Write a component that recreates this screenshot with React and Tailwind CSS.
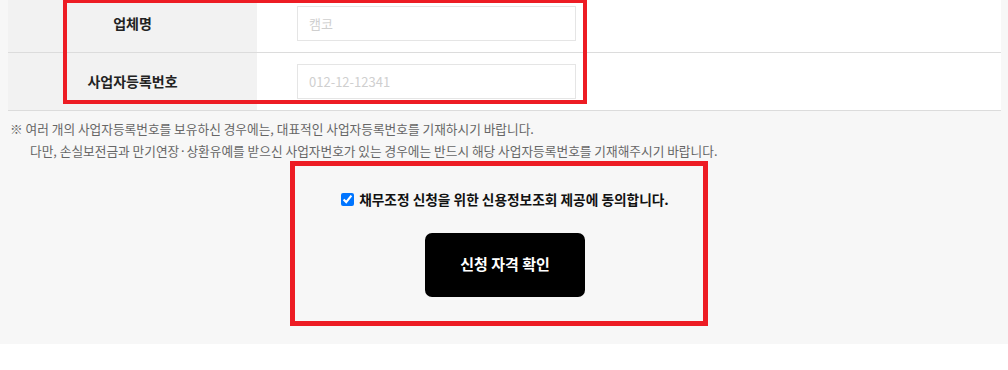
export default function App() {
  const rows = [
    { label: '업체명', placeholder: '캠코' },
    { label: '사업자등록번호', placeholder: '012-12-12341' },
  ];

  return (
    <div className="relative bg-[#f7f7f7] h-[344px] overflow-hidden font-['Noto_Sans_CJK_KR','Noto_Sans',sans-serif]">
      <div className="ml-[8px] w-[993px] mt-[-5px]">
        {rows.map((row) => (
          <div key={row.label} className="flex border-b border-[#dcdcdc]">
            <div className="w-[249px] bg-[#f2f2f2] flex items-center justify-center text-[14px] font-bold text-[#222]">
              {row.label}
            </div>
            <div className="flex-1 bg-white py-[11px] pl-[40px]">
              <input
                type="text"
                placeholder={row.placeholder}
                className="w-[279px] h-[35px] border border-[#e5e5e5] px-[11px] text-[13px] outline-none placeholder:text-[#cfcfcf] bg-white"
              />
            </div>
          </div>
        ))}
      </div>

      <div className="mt-[7px] pl-[10px] text-[12.7px] leading-[22px] text-[#666]">
        <p>※ 여러 개의 사업자등록번호를 보유하신 경우에는, 대표적인 사업자등록번호를 기재하시기 바랍니다.</p>
        <p className="pl-[20px]">다만, 손실보전금과 만기연장·상환유예를 받으신 사업자번호가 있는 경우에는 반드시 해당 사업자등록번호를 기재해주시기 바랍니다.</p>
      </div>

      <div className="flex flex-col items-center mt-[27px] ml-[2px]">
        <label className="flex items-center gap-[5px] text-[13.7px] font-bold text-[#111]">
          <input type="checkbox" defaultChecked className="w-[13px] h-[13px] accent-[#0075ff]" />
          채무조정 신청을 위한 신용정보조회 제공에 동의합니다.
        </label>
        <button className="mt-[23px] w-[160px] h-[64px] rounded-[7px] bg-black text-white text-[15px] font-bold">
          신청 자격 확인
        </button>
      </div>

      <div className="absolute left-[63px] top-[-1px] w-[524px] h-[105px] border-[4px] border-[#ed1c24] pointer-events-none" />
      <div className="absolute left-[290px] top-[161px] w-[418px] h-[165px] border-[5px] border-[#ed1c24] pointer-events-none" />
    </div>
  );
}
